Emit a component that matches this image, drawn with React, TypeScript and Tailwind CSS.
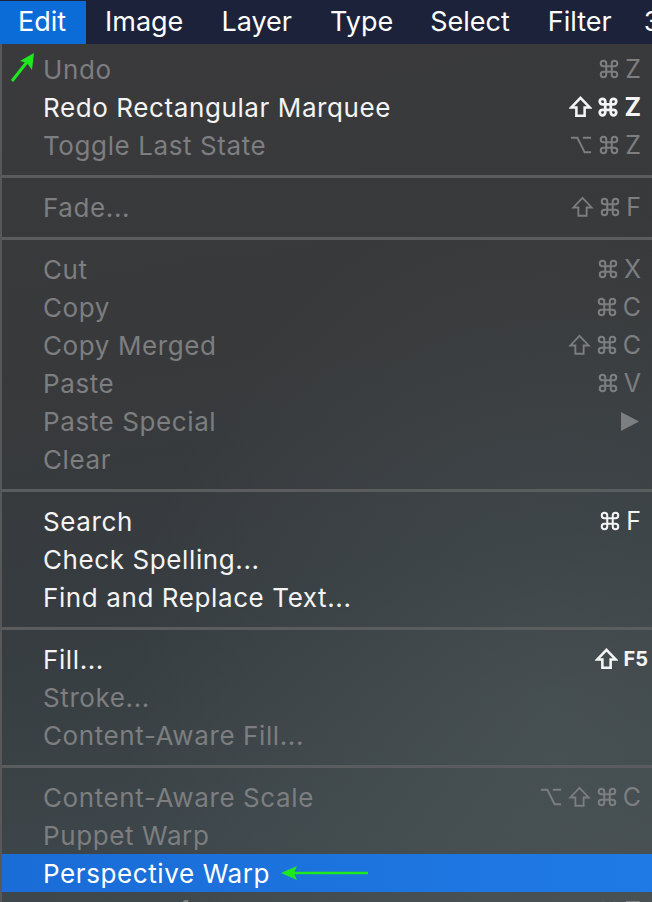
import React from "react";

type Item = { label: string; enabled?: boolean; sc?: React.ReactNode; active?: boolean };

function Cmd({ bold }: { bold?: boolean }) {
  return (
    <svg width="22" height="22" viewBox="0 0 24 24" fill="none" stroke="currentColor" strokeWidth={bold ? 3 : 2.2} strokeLinecap="round" strokeLinejoin="round">
      <path d="M15 6v12a3 3 0 1 0 3-3H6a3 3 0 1 0 3 3V6a3 3 0 1 0-3 3h12a3 3 0 1 0-3-3" />
    </svg>
  );
}

function Shift({ bold }: { bold?: boolean }) {
  return (
    <svg width="23" height="22" viewBox="0 0 24 24" fill="none" stroke="currentColor" strokeWidth={bold ? 2.8 : 2} strokeLinejoin="miter">
      <path d="M12 2 L22 12.5 L16.5 12.5 L16.5 21.5 L7.5 21.5 L7.5 12.5 L2 12.5 Z" />
    </svg>
  );
}

function Opt() {
  return (
    <svg width="24" height="22" viewBox="0 0 24 24" fill="none" stroke="currentColor" strokeWidth="2.2">
      <path d="M1 4 H8 L16 20 H23 M14 4 H23" />
    </svg>
  );
}

function Key({ children, bold }: { children: string; bold?: boolean }) {
  return <span className={`text-[25px] leading-none ${bold ? "font-bold" : ""}`}>{children}</span>;
}

const groups: Item[][] = [
  [
    { label: "Undo", sc: <span className="flex items-center gap-[5px]"><Cmd /><Key>Z</Key></span> },
    {
      label: "Redo Rectangular Marquee",
      enabled: true,
      sc: <span className="flex items-center gap-[5px]"><Shift bold /><Cmd bold /><Key bold>Z</Key></span>,
    },
    { label: "Toggle Last State", sc: <span className="flex items-center gap-[5px]"><Opt /><Cmd /><Key>Z</Key></span> },
  ],
  [{ label: "Fade...", sc: <span className="flex items-center gap-[5px]"><Shift /><Cmd /><Key>F</Key></span> }],
  [
    { label: "Cut", sc: <span className="flex items-center gap-[5px]"><Cmd /><Key>X</Key></span> },
    { label: "Copy", sc: <span className="flex items-center gap-[5px]"><Cmd /><Key>C</Key></span> },
    { label: "Copy Merged", sc: <span className="flex items-center gap-[5px]"><Shift /><Cmd /><Key>C</Key></span> },
    { label: "Paste", sc: <span className="flex items-center gap-[5px]"><Cmd /><Key>V</Key></span> },
    {
      label: "Paste Special",
      sc: (
        <svg width="18" height="19" viewBox="0 0 18 19" className="mr-[2px]">
          <polygon points="0,0 18,9.5 0,19" fill="currentColor" />
        </svg>
      ),
    },
    { label: "Clear" },
  ],
  [
    { label: "Search", enabled: true, sc: <span className="flex items-center gap-[5px]"><Cmd /><Key>F</Key></span> },
    { label: "Check Spelling...", enabled: true },
    { label: "Find and Replace Text...", enabled: true },
  ],
  [
    {
      label: "Fill...",
      enabled: true,
      sc: (
        <span className="mr-[-7px] flex items-center gap-[5px]">
          <Shift bold />
          <span className="text-[20px] font-bold leading-none">F5</span>
        </span>
      ),
    },
    { label: "Stroke..." },
    { label: "Content-Aware Fill..." },
  ],
  [
    {
      label: "Content-Aware Scale",
      sc: <span className="flex items-center gap-[5px]"><Opt /><Shift /><Cmd /><Key>C</Key></span>,
    },
    { label: "Puppet Warp" },
    { label: "Perspective Warp", enabled: true, active: true },
    { label: "Free Transform", sc: <span className="flex items-center gap-[5px]"><Cmd /><Key>T</Key></span> },
  ],
];

function Row({ item }: { item: Item }) {
  const color = item.active ? "text-white" : item.enabled ? "text-[#f4f4f4]" : "text-[#7d7e80]";
  return (
    <div
      className={`relative flex h-[38px] shrink-0 items-center justify-between pl-[41px] pr-[11px] ${color} ${
        item.active ? "bg-[linear-gradient(90deg,#1a6cd6,#1f7ae6)]" : ""
      }`}
    >
      <span className="whitespace-nowrap tracking-[0.6px]">{item.label}</span>
      {item.sc}
      {item.active && (
        <svg className="absolute left-[276px] top-[10px]" width="92" height="18" viewBox="0 0 92 18">
          <line x1="14" y1="9" x2="90" y2="9" stroke="#1ee81e" strokeWidth="2.5" />
          <polygon points="3,9 19,2 16,9 19,16" fill="#1ee81e" />
        </svg>
      )}
    </div>
  );
}

function Sep() {
  return <div className="mt-[11px] mb-[10px] h-[3px] shrink-0 bg-[#5b5c5e]" />;
}

export default function App() {
  return (
    <div
      className="relative h-[902px] w-[652px] overflow-hidden bg-[#38393b] text-[26px]"
      style={{ fontFamily: 'Inter, "Noto Sans", sans-serif' }}
    >
      <div className="flex h-[44px] items-center whitespace-nowrap bg-[#1b2239] pt-[1px] text-[27px] text-white">
        <div className="flex h-full w-[86px] shrink-0 items-center bg-[#0c6cd7] pl-[18px]">Edit</div>
        <div className="pl-[19px]">Image</div>
        <div className="pl-[38px]">Layer</div>
        <div className="pl-[38px]">Type</div>
        <div className="pl-[37px]">Select</div>
        <div className="pl-[38px]">Filter</div>
        <div className="pl-[32px]">3D</div>
      </div>
      <div className="relative flex h-[858px] flex-col border-l-[2px] border-[#57585a] bg-[linear-gradient(170deg,#3a3a3c_0%,#38393b_35%,#363c40_60%,#3d464a_85%,#434b4e_100%)] pt-[6px]">
        <div className="pointer-events-none absolute inset-0 bg-[radial-gradient(ellipse_at_85%_80%,rgba(90,100,100,0.35),transparent_55%)]" />
        <div className="relative flex flex-col">
          {groups.map((g, gi) => (
            <React.Fragment key={gi}>
              {gi > 0 && <Sep />}
              {g.map((it) => (
                <Row key={it.label} item={it} />
              ))}
            </React.Fragment>
          ))}
        </div>
      </div>
      <svg className="absolute left-[8px] top-[50px]" width="30" height="34" viewBox="0 0 30 34">
        <line x1="4" y1="31" x2="19" y2="12" stroke="#1ee81e" strokeWidth="3" />
        <polygon points="26,3 24,20 19,13 12,11" fill="#1ee81e" />
      </svg>
    </div>
  );
}
